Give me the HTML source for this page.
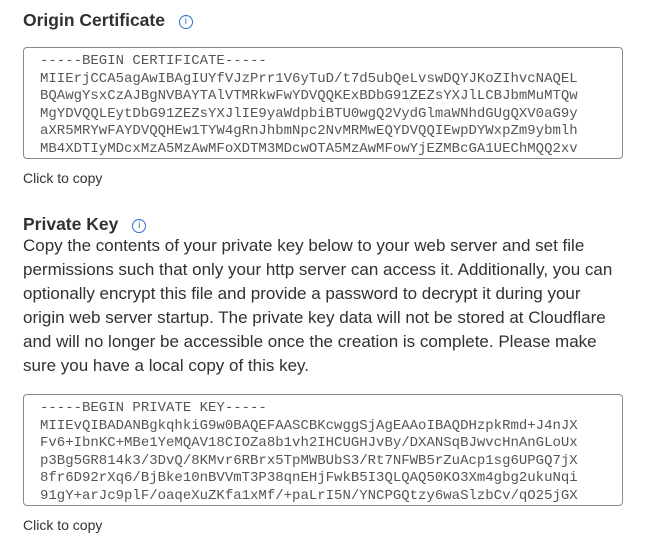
<!DOCTYPE html>
<html><head><style>
body{margin:0;background:#fff;width:648px;height:551px;overflow:hidden;font-family:"Liberation Sans",sans-serif;color:#313131;position:relative}
.h{position:absolute;left:23px;font-weight:bold;font-size:17.5px;line-height:20px}
.ic{display:inline-block;width:12px;height:12px;border:1.3px solid #2c6fd6;border-radius:50%;color:#2c6fd6;font-size:10px;line-height:12px;text-align:center;font-weight:normal;margin-left:9px;vertical-align:2px}
.box{position:absolute;left:23px;width:600px;height:112px;border:1px solid #8a8a8a;border-radius:4px;box-sizing:border-box;overflow:hidden}
.box pre{margin:0;position:absolute;left:16px;top:5px;font-family:"Liberation Mono",monospace;font-size:14px;line-height:17.6px;color:#555}
.c{position:absolute;left:23px;font-size:14px}
.p{position:absolute;left:23px;top:234px;font-size:17px;line-height:24px;white-space:nowrap}
</style></head><body>
<div class="h" style="top:10px">Origin Certificate <span class="ic">i</span></div>
<div class="box" style="top:47px"><pre>-----BEGIN CERTIFICATE-----
MIIErjCCA5agAwIBAgIUYfVJzPrr1V6yTuD/t7d5ubQeLvswDQYJKoZIhvcNAQEL
BQAwgYsxCzAJBgNVBAYTAlVTMRkwFwYDVQQKExBDbG91ZEZsYXJlLCBJbmMuMTQw
MgYDVQQLEytDbG91ZEZsYXJlIE9yaWdpbiBTU0wgQ2VydGlmaWNhdGUgQXV0aG9y
aXR5MRYwFAYDVQQHEw1TYW4gRnJhbmNpc2NvMRMwEQYDVQQIEwpDYWxpZm9ybmlh
MB4XDTIyMDcxMzA5MzAwMFoXDTM3MDcwOTA5MzAwMFowYjEZMBcGA1UEChMQQ2xv</pre></div>
<div class="c" style="top:170px">Click to copy</div>
<div class="h" style="top:214px">Private Key <span class="ic">i</span></div>
<div class="p">Copy the contents of your private key below to your web server and set file<br>permissions such that only your http server can access it. Additionally, you can<br>optionally encrypt this file and provide a password to decrypt it during your<br>origin web server startup. The private key data will not be stored at Cloudflare<br>and will no longer be accessible once the creation is complete. Please make<br>sure you have a local copy of this key.</div>
<div class="box" style="top:394px"><pre>-----BEGIN PRIVATE KEY-----
MIIEvQIBADANBgkqhkiG9w0BAQEFAASCBKcwggSjAgEAAoIBAQDHzpkRmd+J4nJX
Fv6+IbnKC+MBe1YeMQAV18CIOZa8b1vh2IHCUGHJvBy/DXANSqBJwvcHnAnGLoUx
p3Bg5GR814k3/3DvQ/8KMvr6RBrx5TpMWBUbS3/Rt7NFWB5rZuAcp1sg6UPGQ7jX
8fr6D92rXq6/BjBke10nBVVmT3P38qnEHjFwkB5I3QLQAQ50KO3Xm4gbg2ukuNqi
91gY+arJc9plF/oaqeXuZKfa1xMf/+paLrI5N/YNCPGQtzy6waSlzbCv/qO25jGX</pre></div>
<div class="c" style="top:517px">Click to copy</div>
</body></html>
